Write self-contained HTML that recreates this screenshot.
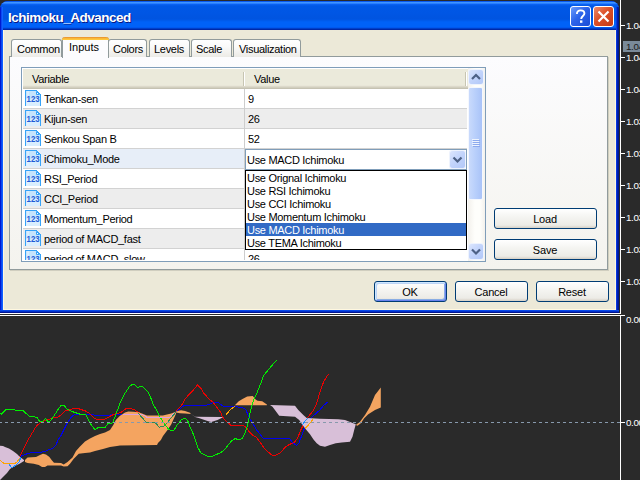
<!DOCTYPE html>
<html><head><meta charset="utf-8"><style>
*{margin:0;padding:0;box-sizing:border-box}
html,body{width:640px;height:480px;overflow:hidden;background:#2A2A2A;font-family:"Liberation Sans",sans-serif;font-size:11px;color:#000}
#chart{position:absolute;left:0;top:0}
.a{position:absolute;white-space:nowrap}
#dlg{position:absolute;left:0;top:1px;width:619px;height:312px;background:#0831D9;border-radius:8px 8px 0 0;overflow:hidden}
#title{position:absolute;left:0;top:0;width:619px;height:29px;
 background:linear-gradient(to bottom,#0A5AF0 0px,#0A5AF0 1px,#3D95FF 1px,#3D95FF 2px,#2A7FFF 2px,#2A7FFF 3px,#0D65F5 3px,#0058E6 5px,#0056E4 12px,#0054E0 18px,#0062F8 21px,#0062F8 26px,#0058F0 26px,#0058F0 27px,#0040C8 27px,#0040C8 28px,#0028A8 28px)}
#ttl{position:absolute;left:8px;top:9px;font-weight:bold;font-size:13.5px;color:#fff;letter-spacing:-0.5px;text-shadow:1px 1px 0 #0A1883;white-space:nowrap;line-height:16px}
#lframe{position:absolute;left:0;top:6px;width:3px;height:306px;background:linear-gradient(to right,#0019CF 0,#0019CF 1px,#0A48F0 1px,#0A48F0 2px,#1060FF 2px)}
#rframe{position:absolute;left:616px;top:6px;width:3px;height:306px;background:linear-gradient(to right,#0838E0 0,#0838E0 1px,#0020B0 1px,#0020B0 2px,#001890 2px)}
#bframe{position:absolute;left:0;top:309px;width:619px;height:3px;background:linear-gradient(to bottom,#0848E8 0,#0848E8 1px,#0030C8 1px,#0030C8 2px,#00138F 2px)}
#client{position:absolute;left:3px;top:29px;width:613px;height:280px;background:#ECE9D8;border-left:1px solid #FFF8E0;border-right:1px solid #FFF8E0;border-bottom:1px solid #FFF8E0}
.tbtn{position:absolute;top:5px;width:21px;height:21px;border:1px solid #fff;border-radius:3px}
.tab{position:absolute;border:1px solid #919B9C;border-bottom:none;border-radius:3px 3px 0 0;background:linear-gradient(#FFFFFF,#FAFAF9 40%,#ECEBE6);white-space:nowrap;line-height:13px;letter-spacing:-0.3px}
#panel{position:absolute;left:9px;top:56px;width:599px;height:214px;border:1px solid #919B9C;background:linear-gradient(#FCFCFE,#F4F3EE);box-shadow:1px 1px 0 #D0CEBF}
.btn{position:absolute;height:21px;border:1px solid #003C74;border-radius:3px;background:linear-gradient(#FFFFFF,#F5F5F2 40%,#ECEBE6 85%,#D6D0C5);text-align:center;line-height:19px;padding-top:1px;padding-right:1px;letter-spacing:-0.2px}
.t{position:absolute;white-space:nowrap;letter-spacing:-0.3px;line-height:13px}
</style></head><body>
<svg id="chart" width="640" height="480" viewBox="0 0 640 480">
<g shape-rendering="crispEdges" fill="#fff">
<rect x="620" y="0" width="1" height="314"/>
<rect x="0" y="313" width="621" height="1"/>
<rect x="0" y="315" width="625" height="1"/>
<rect x="620" y="315" width="1" height="165"/>
<rect x="621" y="25" width="4" height="1"/>
<rect x="621" y="57" width="4" height="1"/>
<rect x="621" y="89" width="4" height="1"/>
<rect x="621" y="121" width="4" height="1"/>
<rect x="621" y="153" width="4" height="1"/>
<rect x="621" y="185" width="4" height="1"/>
<rect x="621" y="217" width="4" height="1"/>
<rect x="621" y="249" width="4" height="1"/>
<rect x="621" y="281" width="4" height="1"/>
<rect x="621" y="422" width="4" height="1"/>
</g>
<g font-family="Liberation Sans" font-size="9.8" fill="#fff">
<text x="626 631 633.5 638.5" y="29">1.0445</text>
<text x="626 631 633.5 638.5" y="61">1.0440</text>
<text x="626 631 633.5 638.5" y="93">1.0435</text>
<text x="626 631 633.5 638.5" y="125">1.0330</text>
<text x="626 631 633.5 638.5" y="157">1.0325</text>
<text x="626 631 633.5 638.5" y="189">1.0320</text>
<text x="626 631 633.5 638.5" y="221">1.0315</text>
<text x="626 631 633.5 638.5" y="253">1.0310</text>
<text x="626 631 633.5 638.5" y="285">1.0305</text>
<text x="626 631 633.5 638.5" y="323">0.0000</text>
<text x="626 631 633.5 638.5" y="426">0.0000</text>
</g>
<rect x="623" y="41" width="17" height="11" fill="#7A8A99"/>
<text x="626 631 633.5 638.5" y="50" font-family="Liberation Sans" font-size="9.8" fill="#1A1A1A">1.0442</text>
<polyline points="20.8,456.3 22.5,455.6 28.75,453.1 40,452.5 45,451.25 50,449.4 53.75,447.5 56.25,444.4 58.1,440 61.25,435 63.75,430 67.5,422.5 71.7,416.7 75,414.2 79.2,414.7 85,414.5 100,415.3 110,415 122,414" fill="none" stroke="#0000EE" stroke-width="1.0" stroke-linejoin="round" shape-rendering="crispEdges"/>
<polyline points="175.9,411.7 180.6,408.4 184.2,405.5 205,405.5 210,404.2 213.3,402.5 218.3,402.5 223.3,406.3 234,406.4 239.7,407.3 244.4,408.3 246.25,410.6 248.1,415.3 251.7,421.7 256.7,430 263.3,438.3 289.2,438.3 293.3,443.3 296.7,445.3 299.2,442.5 302.5,433.3 305.8,425 310,419.2 314.2,415 320,410 322.5,406.7 324.2,405 328.3,401.7" fill="none" stroke="#0000EE" stroke-width="1.0" stroke-linejoin="round" shape-rendering="crispEdges"/>
<polyline points="11.7,468.3 20,455.8 25,446 28.75,438.75 36.25,426.25 41.25,421.9 47.5,420 51.25,418.5 55,417.5 57.5,417.5 61.25,414.75 65,411 68.75,410 73.75,408.5 78.1,408.5 80,409.2 85,410.8 89.2,413 93.3,417.5 96.7,419.2 101.7,420 105.8,418.7 110,416.3 114.2,414.2 120.8,412.5 125.8,408.7 129.2,408.3 133.3,409.2 137.5,411.7 140,413.3" fill="none" stroke="#EE0000" stroke-width="1.0" stroke-linejoin="round" shape-rendering="crispEdges"/>
<polyline points="175.9,411.2 179.7,407.5 181.7,405 185,399.2 189.2,394.2 193.3,390 197.5,385 200.8,388.3 204.2,393.7 209.2,399.2 213.3,402.5 217.5,408.3 220.8,412.5 222.5,417 226.25,421.25 231.25,425.6 235,425 242.5,425 246.25,427.5 249.2,431.7 253.3,435.8 256.7,437.5 260.8,443.3 265,449.2 271.7,455 275.8,455 280,453 285.8,446.7 290,444.2 294.2,442.5 297.5,438.3 300.8,430 304.2,423.3 308.3,416.7 312.5,411.7 316.7,403.3 320,391.7 321.7,386.7 324.2,380.8 328.3,374.2" fill="none" stroke="#EE0000" stroke-width="1.0" stroke-linejoin="round" shape-rendering="crispEdges"/>
<polygon points="25,460 27.5,457.5 36,457 40,455 43,453.7 46,454.4 49.4,457 52,460.6 54,462.7 61,463 63.7,464.4 67.5,462 72.5,457.5 76,451 80,446.5 85,441.5 90,438.5 95,436 100,434 105,432.5 110,430 113.3,425 115.8,420 120,415.8 125,412.5 128.3,411.5 133.3,411.7 138.4,412.2 142,413.5 146.9,415.5 162.8,415.5 171.2,413.6 175.9,411.7 175.9,414 171.2,424.4 167.5,430 163,436 160.9,440 158,443 157,445 120,445.5 117,446 110,447 103,449 95,451 90,452.5 85,453 78.75,453.75 73.75,458.75 70,463.75 67.5,466.25 63.75,466.5 61,465.6 47.5,465.6 45,467 42,467 38.75,465 33.75,463.75 27.5,463 25,462" fill="#F4A460"/>
<polygon points="175.9,411.5 181,410.3 185,411 190,412.8 190.8,413.9 185,413.6 180,413.2 176,412.5" fill="#F4A460"/>
<polygon points="235,405 238.75,401.25 242.5,398.9 247.2,396.6 252.8,396.1 255.6,399.4 257.5,400.8 262.2,401.25 266.9,404.5 266.9,405.2 235,405.2" fill="#F4A460"/>
<polygon points="355.8,425 360,421.7 365,415 370,406.7 375,395 380.8,387.5 380.8,407.5 375,410 368.3,414.2 364.2,418.3 360.8,423.3 357.5,425.8" fill="#F4A460"/>
<polygon points="0,445.8 3,446 5,447 9,448.5 13,451 17,454 20,457 24,460 24,461 20,463.5 13,467 10,469 7,473 3,477 0,480" fill="#D8BFD8"/>
<polygon points="190.8,413.7 195,416.7 222.5,416.9 222.5,417.5 217.5,420 211.25,421.9 207.5,421 198.75,418.1 195,417" fill="#D8BFD8"/>
<polygon points="270,405 295,405.8 298.3,410 303.3,415 306.7,418 320,418.7 338.3,419.2 345,420 355.8,424.2 354.2,430 352.5,436.7 350,441.7 341.7,442.5 335.8,443.3 330,445 325,446.7 320,445.8 316.7,443.3 313.3,439.2 310,434.2 305.8,429.2 302.5,425 299.2,420 295,416.7 279.2,415.8 272.5,406.7" fill="#D8BFD8"/>
<polyline points="0,413 1.25,414.4 3,412.5 6.25,409.4 9.4,409 11.9,409.75 13.75,409 15.6,410.25 23,410.25 25,412.5 29.4,416.25 32.5,416.25 36.9,417.5 40,421.9 42,421.9 45.6,418.5 48,421.9 50,421.25 53.75,416.25 58.1,409.4 61.25,405.25 64.4,406 67.5,409.4 71.25,411.25 75,412.5 80,414.2 85.8,414.2 89.2,421.7 92.5,426.7 95,429.7 98.3,427.5 101.7,427 105,427.5 108.3,423.3 112.5,423 115,416.7 120,403.3 125,393.3 130,385.8 133,384.2 135,385 137.5,387.5 140.8,386.3 143.3,387 148.3,392.5 151.7,400 153.4,404.7 157.2,411.2 160,416.9 164.7,424.4 168.4,429 171.2,431 174,430 176.9,425.3 181.5,419.7 185.3,418.3 188.1,421.6 190,427.2 193.75,435 197.5,446.7 200.8,453 206.7,455.8 210.8,457 215,455 220,453 224.2,450 227.5,445.8 231.7,440.8 235,438.7 240,439.7 242.5,438.3 245,433.3 247.5,425 250,413.3 252.5,403.3 254.2,398.3 257.5,391.7 260.8,383.3 263.3,375.8 267.5,370.8 271.7,365.8 276.7,360" fill="none" stroke="#00EE00" stroke-width="1.0" stroke-linejoin="round" shape-rendering="crispEdges"/>
<polyline points="122,414 142.2,414.5 146.9,417.3 169.4,417.3 175.9,412.2" fill="none" stroke="#DDA0DD" stroke-width="1.0" stroke-linejoin="round" shape-rendering="crispEdges"/>
<polyline points="138.4,413.1 140.3,415.5 145.9,422 155.3,422.5 157.2,424.8 159,427.2 163.7,426.2 167.5,422.5 171.2,417.8 175.9,412.2" fill="none" stroke="#2E8B57" stroke-width="1.0" stroke-linejoin="round" shape-rendering="crispEdges"/>
<polyline points="0,460 2,462 4,463.5 15,463.5 17,462 19,459 21,457" fill="none" stroke="#FFA500" stroke-width="1.0" stroke-linejoin="round" shape-rendering="crispEdges"/>
<polyline points="226.1,414.8 230.3,409.7 234.5,406.4" fill="none" stroke="#FFA500" stroke-width="1.0" stroke-linejoin="round" shape-rendering="crispEdges"/>
<polyline points="305,428.7 308,425.5 311,422 312.6,419.5" fill="none" stroke="#FFA500" stroke-width="1.0" stroke-linejoin="round" shape-rendering="crispEdges"/>
<polyline points="9,464 11,467 13,467 16,465 19,462 21,457" fill="none" stroke="#1E90FF" stroke-width="1.0" stroke-linejoin="round" shape-rendering="crispEdges"/>
<polyline points="301.9,425.5 304,422.5 306,420 308,418" fill="none" stroke="#1E90FF" stroke-width="1.0" stroke-linejoin="round" shape-rendering="crispEdges"/>
<g shape-rendering="crispEdges" fill="#8799AC">
<rect x="-1" y="422" width="3" height="1"/>
<rect x="5" y="422" width="3" height="1"/>
<rect x="11" y="422" width="3" height="1"/>
<rect x="17" y="422" width="3" height="1"/>
<rect x="23" y="422" width="3" height="1"/>
<rect x="29" y="422" width="3" height="1"/>
<rect x="35" y="422" width="3" height="1"/>
<rect x="41" y="422" width="3" height="1"/>
<rect x="47" y="422" width="3" height="1"/>
<rect x="53" y="422" width="3" height="1"/>
<rect x="59" y="422" width="3" height="1"/>
<rect x="65" y="422" width="3" height="1"/>
<rect x="71" y="422" width="3" height="1"/>
<rect x="77" y="422" width="3" height="1"/>
<rect x="83" y="422" width="3" height="1"/>
<rect x="89" y="422" width="3" height="1"/>
<rect x="95" y="422" width="3" height="1"/>
<rect x="101" y="422" width="3" height="1"/>
<rect x="107" y="422" width="3" height="1"/>
<rect x="113" y="422" width="3" height="1"/>
<rect x="119" y="422" width="3" height="1"/>
<rect x="125" y="422" width="3" height="1"/>
<rect x="131" y="422" width="3" height="1"/>
<rect x="137" y="422" width="3" height="1"/>
<rect x="143" y="422" width="3" height="1"/>
<rect x="149" y="422" width="3" height="1"/>
<rect x="155" y="422" width="3" height="1"/>
<rect x="161" y="422" width="3" height="1"/>
<rect x="167" y="422" width="3" height="1"/>
<rect x="173" y="422" width="3" height="1"/>
<rect x="179" y="422" width="3" height="1"/>
<rect x="185" y="422" width="3" height="1"/>
<rect x="191" y="422" width="3" height="1"/>
<rect x="197" y="422" width="3" height="1"/>
<rect x="203" y="422" width="3" height="1"/>
<rect x="209" y="422" width="3" height="1"/>
<rect x="215" y="422" width="3" height="1"/>
<rect x="221" y="422" width="3" height="1"/>
<rect x="227" y="422" width="3" height="1"/>
<rect x="233" y="422" width="3" height="1"/>
<rect x="239" y="422" width="3" height="1"/>
<rect x="245" y="422" width="3" height="1"/>
<rect x="251" y="422" width="3" height="1"/>
<rect x="257" y="422" width="3" height="1"/>
<rect x="263" y="422" width="3" height="1"/>
<rect x="269" y="422" width="3" height="1"/>
<rect x="275" y="422" width="3" height="1"/>
<rect x="281" y="422" width="3" height="1"/>
<rect x="287" y="422" width="3" height="1"/>
<rect x="293" y="422" width="3" height="1"/>
<rect x="299" y="422" width="3" height="1"/>
<rect x="305" y="422" width="3" height="1"/>
<rect x="311" y="422" width="3" height="1"/>
<rect x="317" y="422" width="3" height="1"/>
<rect x="323" y="422" width="3" height="1"/>
<rect x="329" y="422" width="3" height="1"/>
<rect x="335" y="422" width="3" height="1"/>
<rect x="341" y="422" width="3" height="1"/>
<rect x="347" y="422" width="3" height="1"/>
<rect x="353" y="422" width="3" height="1"/>
<rect x="359" y="422" width="3" height="1"/>
<rect x="365" y="422" width="3" height="1"/>
<rect x="371" y="422" width="3" height="1"/>
<rect x="377" y="422" width="3" height="1"/>
<rect x="383" y="422" width="3" height="1"/>
<rect x="389" y="422" width="3" height="1"/>
<rect x="395" y="422" width="3" height="1"/>
<rect x="401" y="422" width="3" height="1"/>
<rect x="407" y="422" width="3" height="1"/>
<rect x="413" y="422" width="3" height="1"/>
<rect x="419" y="422" width="3" height="1"/>
<rect x="425" y="422" width="3" height="1"/>
<rect x="431" y="422" width="3" height="1"/>
<rect x="437" y="422" width="3" height="1"/>
<rect x="443" y="422" width="3" height="1"/>
<rect x="449" y="422" width="3" height="1"/>
<rect x="455" y="422" width="3" height="1"/>
<rect x="461" y="422" width="3" height="1"/>
<rect x="467" y="422" width="3" height="1"/>
<rect x="473" y="422" width="3" height="1"/>
<rect x="479" y="422" width="3" height="1"/>
<rect x="485" y="422" width="3" height="1"/>
<rect x="491" y="422" width="3" height="1"/>
<rect x="497" y="422" width="3" height="1"/>
<rect x="503" y="422" width="3" height="1"/>
<rect x="509" y="422" width="3" height="1"/>
<rect x="515" y="422" width="3" height="1"/>
<rect x="521" y="422" width="3" height="1"/>
<rect x="527" y="422" width="3" height="1"/>
<rect x="533" y="422" width="3" height="1"/>
<rect x="539" y="422" width="3" height="1"/>
<rect x="545" y="422" width="3" height="1"/>
<rect x="551" y="422" width="3" height="1"/>
<rect x="557" y="422" width="3" height="1"/>
<rect x="563" y="422" width="3" height="1"/>
<rect x="569" y="422" width="3" height="1"/>
<rect x="575" y="422" width="3" height="1"/>
<rect x="581" y="422" width="3" height="1"/>
<rect x="587" y="422" width="3" height="1"/>
<rect x="593" y="422" width="3" height="1"/>
<rect x="599" y="422" width="3" height="1"/>
<rect x="605" y="422" width="3" height="1"/>
<rect x="611" y="422" width="3" height="1"/>
<rect x="617" y="422" width="3" height="1"/>
</g>
</svg>
<div id="dlg">
<div id="title"></div>
<div id="ttl">Ichimoku_Advanced</div>
<div class="tbtn" style="left:570px;background:linear-gradient(135deg,#6C9CFA,#2D64EA 45%,#1A4CD6)"><svg width="19" height="19" style="position:absolute;left:0;top:0"><path d="M5.9 6.9 C5.9 4.4 7.6 3.4 9.6 3.4 C11.8 3.4 13.4 4.7 13.4 6.6 C13.4 8.9 10.2 9.3 10.2 11.9" fill="none" stroke="#fff" stroke-width="1.9"/><rect x="9" y="13.4" width="2.4" height="2.4" fill="#fff"/></svg></div>
<div class="tbtn" style="left:593px;background:linear-gradient(135deg,#EC8A6A,#DC5028 45%,#C63A16)"><svg width="19" height="19" style="position:absolute;left:0;top:0"><path d="M4.5 4.5 L14.5 14.5 M14.5 4.5 L4.5 14.5" stroke="#fff" stroke-width="2.2"/></svg></div>
<div id="lframe"></div><div id="rframe"></div><div id="bframe"></div>
<div id="client"></div>
</div>
<div id="panel"></div>
<div class="tab" style="left:11px;top:39px;width:51px;height:18px"></div>
<div class="t" style="left:17px;top:43px">Common</div>
<div class="tab" style="left:108px;top:39px;width:39px;height:18px"></div>
<div class="t" style="left:113px;top:43px">Colors</div>
<div class="tab" style="left:149px;top:39px;width:41px;height:18px"></div>
<div class="t" style="left:154px;top:43px">Levels</div>
<div class="tab" style="left:191px;top:39px;width:41px;height:18px"></div>
<div class="t" style="left:196px;top:43px">Scale</div>
<div class="tab" style="left:233px;top:39px;width:68px;height:18px"></div>
<div class="t" style="left:239px;top:43px">Visualization</div>
<div class="a" style="left:62px;top:37px;width:47px;height:21px;border:1px solid #919B9C;border-top:none;border-bottom:none;background:#FCFCFE;border-radius:3px 3px 0 0"></div>
<div class="a" style="left:62px;top:37px;width:47px;height:3px;background:linear-gradient(#E68B2C,#FFC73C 66%,#FFC73C);border-radius:3px 3px 0 0"></div>
<div class="t" style="left:69px;top:41px;letter-spacing:0">Inputs</div>
<div class="a" style="left:21px;top:67px;width:465px;height:195px;border:1px solid #7F9DB9;background:#fff"></div>
<div class="a" style="left:23px;top:69px;width:445px;height:20px;background:linear-gradient(#EBEADB 0,#EBEADB 16px,#E8E6D8 16px,#E8E6D8 17px,#DCD9CA 17px,#DCD9CA 18px,#D1CEBE 18px,#D1CEBE 19px,#C5C2B2 19px)"></div>
<div class="a" style="left:243px;top:72px;width:1px;height:14px;background:#C7C5B2"></div>
<div class="a" style="left:244px;top:72px;width:1px;height:14px;background:#FFFFFF"></div>
<div class="a" style="left:465px;top:72px;width:1px;height:14px;background:#C7C5B2"></div>
<div class="a" style="left:466px;top:72px;width:1px;height:14px;background:#FFFFFF"></div>
<div class="t" style="left:32px;top:73px">Variable</div>
<div class="t" style="left:254px;top:73px">Value</div>
<div class="a" style="left:22px;top:89px;width:446px;height:171px;overflow:hidden">
<div class="a" style="left:1px;top:0px;width:444px;height:19px;background:#FFFFFF"></div>
<div class="a" style="left:1px;top:19px;width:444px;height:1px;background:#D2D2D2"></div>
<svg class="a" style="left:3px;top:1px" width="16" height="16" viewBox="0 0 16 16"><path d="M1 1 H11.5 L15 4.5 V16 H1 Z" fill="#C6E4FC"/><rect x="1" y="9" width="14" height="7" fill="#D9EEFE"/><rect x="2" y="1" width="2" height="15" fill="#E2F2FE" opacity="0.6"/><path d="M0.5 16 V0.5 H11.5 L15.5 4.5 V16" fill="none" stroke="#35A2F8" stroke-width="1" shape-rendering="crispEdges"/><path d="M11.5 1.5 V4.5 H14.5 Z" fill="#FFFFFF" stroke="#35A2F8" stroke-width="1" stroke-linejoin="round"/><text x="1.6" y="12" textLength="13" lengthAdjust="spacingAndGlyphs" font-family="Liberation Sans" font-weight="bold" font-size="9.8" fill="#1E5CD6">123</text></svg>
<div class="t" style="left:22px;top:4px">Tenkan-sen</div>
<div class="t" style="left:226px;top:4px">9</div>
<div class="a" style="left:1px;top:20px;width:444px;height:19px;background:#EDEDED"></div>
<div class="a" style="left:1px;top:39px;width:444px;height:1px;background:#D2D2D2"></div>
<svg class="a" style="left:3px;top:21px" width="16" height="16" viewBox="0 0 16 16"><path d="M1 1 H11.5 L15 4.5 V16 H1 Z" fill="#C6E4FC"/><rect x="1" y="9" width="14" height="7" fill="#D9EEFE"/><rect x="2" y="1" width="2" height="15" fill="#E2F2FE" opacity="0.6"/><path d="M0.5 16 V0.5 H11.5 L15.5 4.5 V16" fill="none" stroke="#35A2F8" stroke-width="1" shape-rendering="crispEdges"/><path d="M11.5 1.5 V4.5 H14.5 Z" fill="#FFFFFF" stroke="#35A2F8" stroke-width="1" stroke-linejoin="round"/><text x="1.6" y="12" textLength="13" lengthAdjust="spacingAndGlyphs" font-family="Liberation Sans" font-weight="bold" font-size="9.8" fill="#1E5CD6">123</text></svg>
<div class="t" style="left:22px;top:24px">Kijun-sen</div>
<div class="t" style="left:226px;top:24px">26</div>
<div class="a" style="left:1px;top:40px;width:444px;height:19px;background:#FFFFFF"></div>
<div class="a" style="left:1px;top:59px;width:444px;height:1px;background:#D2D2D2"></div>
<svg class="a" style="left:3px;top:41px" width="16" height="16" viewBox="0 0 16 16"><path d="M1 1 H11.5 L15 4.5 V16 H1 Z" fill="#C6E4FC"/><rect x="1" y="9" width="14" height="7" fill="#D9EEFE"/><rect x="2" y="1" width="2" height="15" fill="#E2F2FE" opacity="0.6"/><path d="M0.5 16 V0.5 H11.5 L15.5 4.5 V16" fill="none" stroke="#35A2F8" stroke-width="1" shape-rendering="crispEdges"/><path d="M11.5 1.5 V4.5 H14.5 Z" fill="#FFFFFF" stroke="#35A2F8" stroke-width="1" stroke-linejoin="round"/><text x="1.6" y="12" textLength="13" lengthAdjust="spacingAndGlyphs" font-family="Liberation Sans" font-weight="bold" font-size="9.8" fill="#1E5CD6">123</text></svg>
<div class="t" style="left:22px;top:44px">Senkou Span B</div>
<div class="t" style="left:226px;top:44px">52</div>
<div class="a" style="left:1px;top:60px;width:444px;height:19px;background:#E7EEF8"></div>
<div class="a" style="left:1px;top:79px;width:444px;height:1px;background:#D2D2D2"></div>
<svg class="a" style="left:3px;top:61px" width="16" height="16" viewBox="0 0 16 16"><path d="M1 1 H11.5 L15 4.5 V16 H1 Z" fill="#C6E4FC"/><rect x="1" y="9" width="14" height="7" fill="#D9EEFE"/><rect x="2" y="1" width="2" height="15" fill="#E2F2FE" opacity="0.6"/><path d="M0.5 16 V0.5 H11.5 L15.5 4.5 V16" fill="none" stroke="#35A2F8" stroke-width="1" shape-rendering="crispEdges"/><path d="M11.5 1.5 V4.5 H14.5 Z" fill="#FFFFFF" stroke="#35A2F8" stroke-width="1" stroke-linejoin="round"/><text x="1.6" y="12" textLength="13" lengthAdjust="spacingAndGlyphs" font-family="Liberation Sans" font-weight="bold" font-size="9.8" fill="#1E5CD6">123</text></svg>
<div class="t" style="left:22px;top:64px">iChimoku_Mode</div>
<div class="a" style="left:1px;top:80px;width:444px;height:19px;background:#FFFFFF"></div>
<div class="a" style="left:1px;top:99px;width:444px;height:1px;background:#D2D2D2"></div>
<svg class="a" style="left:3px;top:81px" width="16" height="16" viewBox="0 0 16 16"><path d="M1 1 H11.5 L15 4.5 V16 H1 Z" fill="#C6E4FC"/><rect x="1" y="9" width="14" height="7" fill="#D9EEFE"/><rect x="2" y="1" width="2" height="15" fill="#E2F2FE" opacity="0.6"/><path d="M0.5 16 V0.5 H11.5 L15.5 4.5 V16" fill="none" stroke="#35A2F8" stroke-width="1" shape-rendering="crispEdges"/><path d="M11.5 1.5 V4.5 H14.5 Z" fill="#FFFFFF" stroke="#35A2F8" stroke-width="1" stroke-linejoin="round"/><text x="1.6" y="12" textLength="13" lengthAdjust="spacingAndGlyphs" font-family="Liberation Sans" font-weight="bold" font-size="9.8" fill="#1E5CD6">123</text></svg>
<div class="t" style="left:22px;top:84px">RSI_Period</div>
<div class="a" style="left:1px;top:100px;width:444px;height:19px;background:#EDEDED"></div>
<div class="a" style="left:1px;top:119px;width:444px;height:1px;background:#D2D2D2"></div>
<svg class="a" style="left:3px;top:101px" width="16" height="16" viewBox="0 0 16 16"><path d="M1 1 H11.5 L15 4.5 V16 H1 Z" fill="#C6E4FC"/><rect x="1" y="9" width="14" height="7" fill="#D9EEFE"/><rect x="2" y="1" width="2" height="15" fill="#E2F2FE" opacity="0.6"/><path d="M0.5 16 V0.5 H11.5 L15.5 4.5 V16" fill="none" stroke="#35A2F8" stroke-width="1" shape-rendering="crispEdges"/><path d="M11.5 1.5 V4.5 H14.5 Z" fill="#FFFFFF" stroke="#35A2F8" stroke-width="1" stroke-linejoin="round"/><text x="1.6" y="12" textLength="13" lengthAdjust="spacingAndGlyphs" font-family="Liberation Sans" font-weight="bold" font-size="9.8" fill="#1E5CD6">123</text></svg>
<div class="t" style="left:22px;top:104px">CCI_Period</div>
<div class="a" style="left:1px;top:120px;width:444px;height:19px;background:#FFFFFF"></div>
<div class="a" style="left:1px;top:139px;width:444px;height:1px;background:#D2D2D2"></div>
<svg class="a" style="left:3px;top:121px" width="16" height="16" viewBox="0 0 16 16"><path d="M1 1 H11.5 L15 4.5 V16 H1 Z" fill="#C6E4FC"/><rect x="1" y="9" width="14" height="7" fill="#D9EEFE"/><rect x="2" y="1" width="2" height="15" fill="#E2F2FE" opacity="0.6"/><path d="M0.5 16 V0.5 H11.5 L15.5 4.5 V16" fill="none" stroke="#35A2F8" stroke-width="1" shape-rendering="crispEdges"/><path d="M11.5 1.5 V4.5 H14.5 Z" fill="#FFFFFF" stroke="#35A2F8" stroke-width="1" stroke-linejoin="round"/><text x="1.6" y="12" textLength="13" lengthAdjust="spacingAndGlyphs" font-family="Liberation Sans" font-weight="bold" font-size="9.8" fill="#1E5CD6">123</text></svg>
<div class="t" style="left:22px;top:124px">Momentum_Period</div>
<div class="a" style="left:1px;top:140px;width:444px;height:19px;background:#EDEDED"></div>
<div class="a" style="left:1px;top:159px;width:444px;height:1px;background:#D2D2D2"></div>
<svg class="a" style="left:3px;top:141px" width="16" height="16" viewBox="0 0 16 16"><path d="M1 1 H11.5 L15 4.5 V16 H1 Z" fill="#C6E4FC"/><rect x="1" y="9" width="14" height="7" fill="#D9EEFE"/><rect x="2" y="1" width="2" height="15" fill="#E2F2FE" opacity="0.6"/><path d="M0.5 16 V0.5 H11.5 L15.5 4.5 V16" fill="none" stroke="#35A2F8" stroke-width="1" shape-rendering="crispEdges"/><path d="M11.5 1.5 V4.5 H14.5 Z" fill="#FFFFFF" stroke="#35A2F8" stroke-width="1" stroke-linejoin="round"/><text x="1.6" y="12" textLength="13" lengthAdjust="spacingAndGlyphs" font-family="Liberation Sans" font-weight="bold" font-size="9.8" fill="#1E5CD6">123</text></svg>
<div class="t" style="left:22px;top:144px">period of MACD_fast</div>
<div class="a" style="left:1px;top:160px;width:444px;height:19px;background:#FFFFFF"></div>
<div class="a" style="left:1px;top:179px;width:444px;height:1px;background:#D2D2D2"></div>
<svg class="a" style="left:3px;top:161px" width="16" height="16" viewBox="0 0 16 16"><path d="M1 1 H11.5 L15 4.5 V16 H1 Z" fill="#C6E4FC"/><rect x="1" y="9" width="14" height="7" fill="#D9EEFE"/><rect x="2" y="1" width="2" height="15" fill="#E2F2FE" opacity="0.6"/><path d="M0.5 16 V0.5 H11.5 L15.5 4.5 V16" fill="none" stroke="#35A2F8" stroke-width="1" shape-rendering="crispEdges"/><path d="M11.5 1.5 V4.5 H14.5 Z" fill="#FFFFFF" stroke="#35A2F8" stroke-width="1" stroke-linejoin="round"/><text x="1.6" y="12" textLength="13" lengthAdjust="spacingAndGlyphs" font-family="Liberation Sans" font-weight="bold" font-size="9.8" fill="#1E5CD6">123</text></svg>
<div class="t" style="left:22px;top:164px">period of MACD_slow</div>
<div class="t" style="left:226px;top:164px">26</div>
<div class="a" style="left:222px;top:0px;width:1px;height:171px;background:#CDCDCD"></div>
</div>
<div class="a" style="left:22px;top:260px;width:463px;height:1px;background:#fff"></div>
<div class="a" style="left:468px;top:68px;width:17px;height:193px;background:linear-gradient(to right,#F3F1EC,#FEFEFB 40%,#FEFEFB 70%,#F3F1EC)"></div>
<div class="a" style="left:469px;top:70px;width:14px;height:14px;border-radius:2px;background:linear-gradient(135deg,#DCE6FD,#C1D3FB 50%,#B2C8F8);box-shadow:0 0 0 1px #EEF3FD"><svg width="14" height="14" style="position:absolute;left:0;top:0"><path d="M3.0 9.0 L7.0 5.0 L11.0 9.0" fill="none" stroke="#4D6185" stroke-width="2.2"/></svg></div>
<div class="a" style="left:468px;top:87px;width:15px;height:113px;border:1px solid #F4F7FE;border-radius:2px;background:linear-gradient(to right,#C9DAFC,#B8CFFB 50%,#A9C3F8)"></div>
<div class="a" style="left:472px;top:139px;width:7px;height:1px;background:#EEF4FE"></div>
<div class="a" style="left:473px;top:140px;width:7px;height:1px;background:#8CAAEE"></div>
<div class="a" style="left:472px;top:141px;width:7px;height:1px;background:#EEF4FE"></div>
<div class="a" style="left:473px;top:142px;width:7px;height:1px;background:#8CAAEE"></div>
<div class="a" style="left:472px;top:143px;width:7px;height:1px;background:#EEF4FE"></div>
<div class="a" style="left:473px;top:144px;width:7px;height:1px;background:#8CAAEE"></div>
<div class="a" style="left:472px;top:145px;width:7px;height:1px;background:#EEF4FE"></div>
<div class="a" style="left:473px;top:146px;width:7px;height:1px;background:#8CAAEE"></div>
<div class="a" style="left:469px;top:244px;width:14px;height:15px;border-radius:2px;background:linear-gradient(135deg,#DCE6FD,#C1D3FB 50%,#B2C8F8);box-shadow:0 0 0 1px #EEF3FD"><svg width="14" height="15" style="position:absolute;left:0;top:0"><path d="M3.0 5.5 L7.0 9.5 L11.0 5.5" fill="none" stroke="#4D6185" stroke-width="2.2"/></svg></div>
<div class="a" style="left:245px;top:149px;width:222px;height:21px;border:1px solid #7F9DB9;background:#fff"></div>
<div class="t" style="left:247px;top:154px">Use MACD Ichimoku</div>
<div class="a" style="left:450px;top:151px;width:15px;height:17px;border-radius:2px;background:linear-gradient(135deg,#DCE6FD,#C1D3FB 50%,#B2C8F8);box-shadow:0 0 0 1px #EEF3FD"><svg width="15" height="17" style="position:absolute;left:0;top:0"><path d="M3.5 6.5 L7.5 10.5 L11.5 6.5" fill="none" stroke="#4D6185" stroke-width="2.2"/></svg></div>
<div class="a" style="left:245px;top:170px;width:222px;height:80px;border:1px solid #000;background:#fff"></div>
<div class="t" style="left:247px;top:172px">Use Orignal Ichimoku</div>
<div class="t" style="left:247px;top:185px">Use RSI Ichimoku</div>
<div class="t" style="left:247px;top:198px">Use CCI Ichimoku</div>
<div class="t" style="left:247px;top:211px">Use Momentum Ichimoku</div>
<div class="a" style="left:246px;top:223px;width:220px;height:13px;background:#316AC5"></div>
<div class="t" style="left:247px;top:224px;color:#fff">Use MACD Ichimoku</div>
<div class="t" style="left:247px;top:237px">Use TEMA Ichimoku</div>
<div class="btn" style="left:494px;top:208px;width:103px">Load</div>
<div class="btn" style="left:494px;top:239px;width:103px">Save</div>
<div class="btn" style="left:374px;top:281px;width:73px;box-shadow:inset 1px 1px 0 #CEE7FF,inset -1px -1px 0 #6982EE,inset 2px 2px 0 #BCD4F6,inset -2px -2px 0 #89ADE4">OK</div>
<div class="btn" style="left:455px;top:281px;width:73px">Cancel</div>
<div class="btn" style="left:536px;top:281px;width:73px">Reset</div>
</body></html>
